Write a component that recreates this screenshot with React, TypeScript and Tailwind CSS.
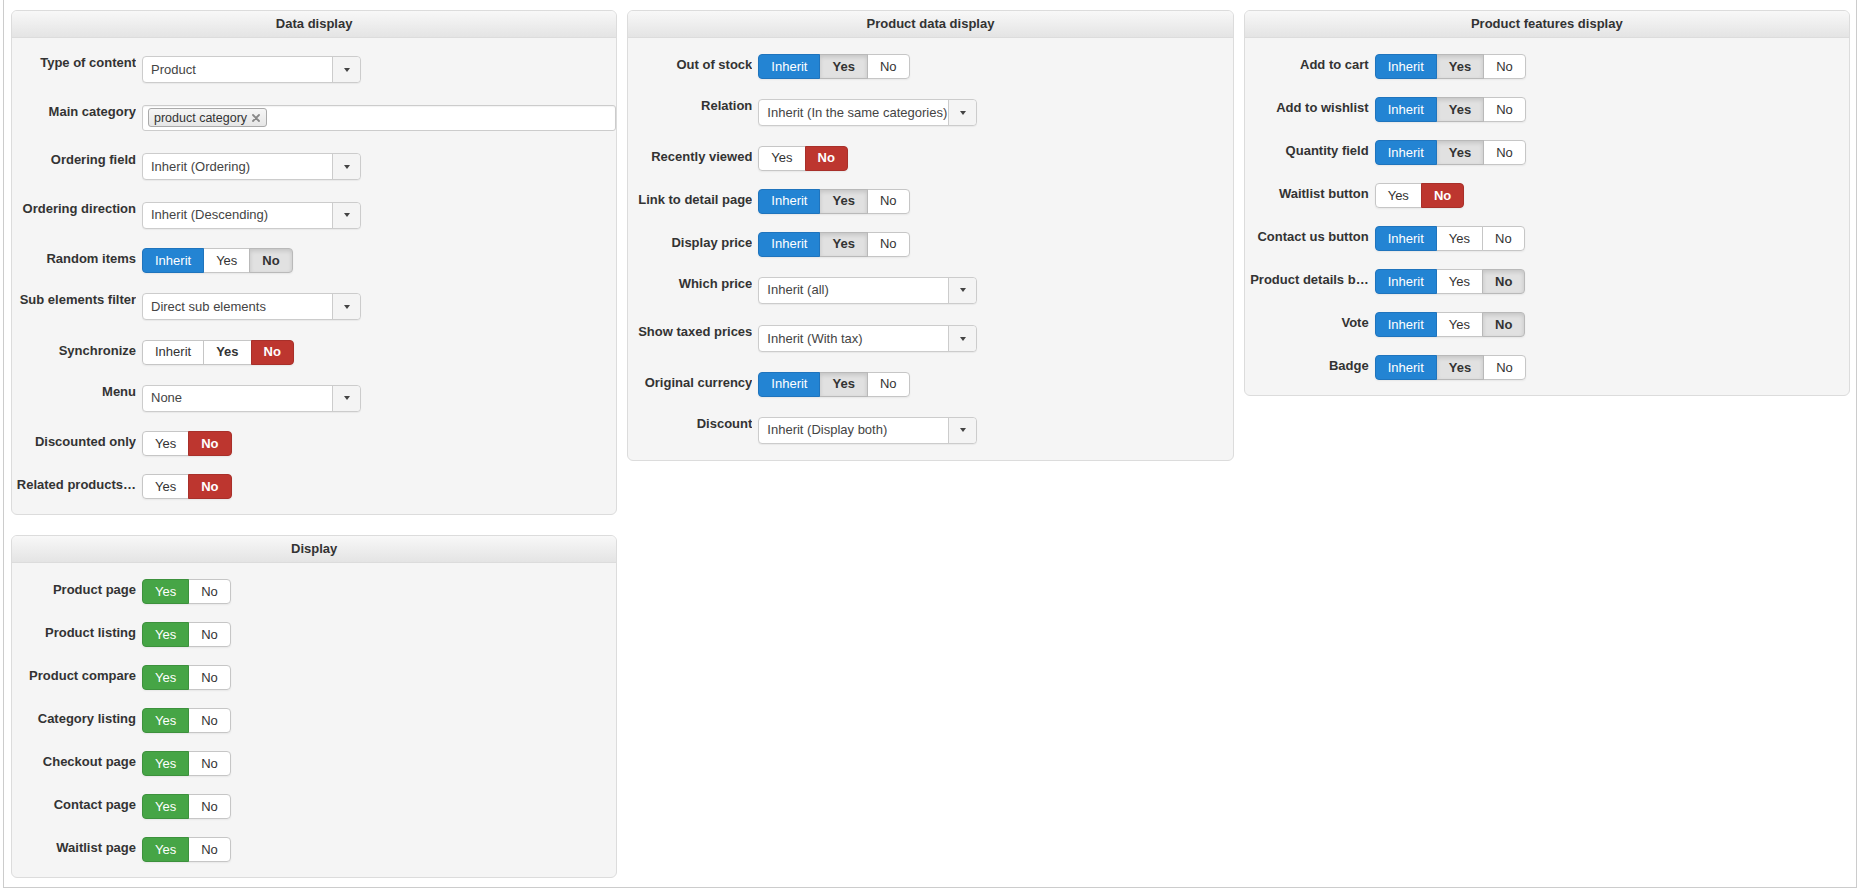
import React from 'react';

type Tone = 'blue' | 'red' | 'green' | 'gray' | 'white' | 'whiteBold';
type Seg = { t: string; s: Tone };

const toneCls: Record<Tone, string> = {
  blue: 'z-10 border-[#1f74bd] bg-[#2384d3] text-white',
  red: 'z-10 border-[#a8302a] bg-[#bd362f] text-white font-bold',
  green: 'z-10 border-[#3d913d] bg-[#46a546] text-white',
  gray: 'z-[5] border-[#b9b9b9] bg-[#e1e1e1] text-[#333333] font-bold shadow-[inset_0_2px_4px_rgba(0,0,0,0.13)]',
  white: 'border-[#c6c6c6] bg-white text-[#333333]',
  whiteBold: 'border-[#c6c6c6] bg-white text-[#333333] font-bold',
};

function Toggle({ segs }: { segs: Seg[] }) {
  return (
    <div className="flex h-[25px] shadow-[0_1px_2px_rgba(0,0,0,0.06)] rounded-[4px]">
      {segs.map((sg, i) => {
        const first = i === 0;
        const last = i === segs.length - 1;
        return (
          <div
            key={i}
            className={[
              'relative flex h-[25px] items-center border px-[12px] text-[13px] leading-[18px]',
              first ? 'rounded-l-[4px]' : '-ml-px',
              last ? 'rounded-r-[4px]' : '',
              toneCls[sg.s],
            ].join(' ')}
          >
            {sg.t}
          </div>
        );
      })}
    </div>
  );
}

function Select({ value }: { value: string }) {
  return (
    <div className="mt-[2px] flex h-[27px] w-[219px] items-stretch rounded-[4px] border border-[#cccccc] bg-white shadow-[0_1px_1px_rgba(0,0,0,0.05)]">
      <div className="flex flex-1 items-center overflow-hidden whitespace-nowrap pl-[8px] text-[13px] text-[#444444]">
        {value}
      </div>
      <div className="flex w-[28px] items-center justify-center rounded-r-[4px] border-l border-[#cccccc] bg-[#f4f4f4]">
        <div className="h-0 w-0 border-x-[3px] border-t-[4px] border-x-transparent border-t-[#444444]" />
      </div>
    </div>
  );
}

function TagInput() {
  return (
    <div className="mt-[2px] flex h-[26px] flex-1 items-center rounded-[3px] border border-[#cccccc] bg-white pl-[5px] shadow-[inset_0_1px_1px_rgba(0,0,0,0.05)]">
      <div className="flex h-[19px] items-center gap-[5px] rounded-[3px] border border-[#aaaaaa] bg-gradient-to-b from-[#f6f6f6] to-[#e6e6e6] pl-[5px] pr-[6px] text-[12.5px] leading-[16px] text-[#333333]">
        <span>product category</span>
        <svg width="8" height="8" viewBox="0 0 8 8">
          <path d="M1 1 L7 7 M7 1 L1 7" stroke="#888888" strokeWidth="1.8" strokeLinecap="round" />
        </svg>
      </div>
    </div>
  );
}

type Kind = 'select' | 'button';

function Row({ label, kind, children, last }: { label: string; kind: Kind; children: React.ReactNode; last?: boolean }) {
  return (
    <div className={['flex', kind === 'select' ? 'h-[30.5px]' : 'h-[25px]', last ? '' : 'mb-[18px]'].join(' ')}>
      <div
        className={[
          'w-[120px] shrink-0 overflow-hidden whitespace-nowrap text-right text-[13px] font-bold leading-[18px] text-[#333333]',
          kind === 'select' ? 'pt-0' : 'pt-[2px]',
        ].join(' ')}
      >
        {label}
      </div>
      <div className="ml-[6px] flex min-w-0 flex-1 items-start">{children}</div>
    </div>
  );
}

function Panel({ title, children }: { title: string; children: React.ReactNode }) {
  return (
    <div className="rounded-[6px] border border-[#dcdcdc] bg-[#f5f5f5]">
      <div className="flex h-[27px] items-center justify-center rounded-t-[5px] border-b border-[#dcdcdc] bg-gradient-to-b from-[#f8f8f8] to-[#e4e4e4] text-[13px] font-bold text-[#333333]">
        {title}
      </div>
      <div className="pb-[15px] pl-[4px] pt-[16px]">{children}</div>
    </div>
  );
}

const IYN = (y: Tone, n: Tone, i: Tone = 'blue'): Seg[] => [
  { t: 'Inherit', s: i },
  { t: 'Yes', s: y },
  { t: 'No', s: n },
];
const YN = (y: Tone, n: Tone): Seg[] => [
  { t: 'Yes', s: y },
  { t: 'No', s: n },
];

export default function App() {
  const displayRows = [
    'Product page',
    'Product listing',
    'Product compare',
    'Category listing',
    'Checkout page',
    'Contact page',
    'Waitlist page',
  ];
  return (
    <div className="min-h-[892px] w-full bg-white font-['Liberation_Sans',Arial,sans-serif]">
      <div className="ml-[3px] h-[888px] w-[1854px] border-x border-b border-[#cccccc] pl-[7px] pr-[6px] pt-[10px]">
        <div className="grid grid-cols-3 items-start gap-x-[10px]">
          <div className="flex flex-col gap-[20px]">
            <Panel title="Data display">
              <Row label="Type of content" kind="select">
                <Select value="Product" />
              </Row>
              <Row label="Main category" kind="select">
                <TagInput />
              </Row>
              <Row label="Ordering field" kind="select">
                <Select value="Inherit (Ordering)" />
              </Row>
              <Row label="Ordering direction" kind="select">
                <Select value="Inherit (Descending)" />
              </Row>
              <Row label="Random items" kind="button">
                <Toggle segs={IYN('white', 'gray')} />
              </Row>
              <Row label="Sub elements filter" kind="select">
                <Select value="Direct sub elements" />
              </Row>
              <Row label="Synchronize" kind="button">
                <Toggle segs={IYN('whiteBold', 'red', 'white')} />
              </Row>
              <Row label="Menu" kind="select">
                <Select value="None" />
              </Row>
              <Row label="Discounted only" kind="button">
                <Toggle segs={YN('white', 'red')} />
              </Row>
              <Row label="Related products…" kind="button" last>
                <Toggle segs={YN('white', 'red')} />
              </Row>
            </Panel>
            <Panel title="Display">
              {displayRows.map((l, i) => (
                <Row key={l} label={l} kind="button" last={i === displayRows.length - 1}>
                  <Toggle segs={YN('green', 'white')} />
                </Row>
              ))}
            </Panel>
          </div>

          <div className="flex flex-col">
            <Panel title="Product data display">
              <Row label="Out of stock" kind="button">
                <Toggle segs={IYN('gray', 'white')} />
              </Row>
              <Row label="Relation" kind="select">
                <Select value="Inherit (In the same categories)" />
              </Row>
              <Row label="Recently viewed" kind="button">
                <Toggle segs={YN('white', 'red')} />
              </Row>
              <Row label="Link to detail page" kind="button">
                <Toggle segs={IYN('gray', 'white')} />
              </Row>
              <Row label="Display price" kind="button">
                <Toggle segs={IYN('gray', 'white')} />
              </Row>
              <Row label="Which price" kind="select">
                <Select value="Inherit (all)" />
              </Row>
              <Row label="Show taxed prices" kind="select">
                <Select value="Inherit (With tax)" />
              </Row>
              <Row label="Original currency" kind="button">
                <Toggle segs={IYN('gray', 'white')} />
              </Row>
              <Row label="Discount" kind="select" last>
                <Select value="Inherit (Display both)" />
              </Row>
            </Panel>
          </div>

          <div className="flex flex-col">
            <Panel title="Product features display">
              <Row label="Add to cart" kind="button">
                <Toggle segs={IYN('gray', 'white')} />
              </Row>
              <Row label="Add to wishlist" kind="button">
                <Toggle segs={IYN('gray', 'white')} />
              </Row>
              <Row label="Quantity field" kind="button">
                <Toggle segs={IYN('gray', 'white')} />
              </Row>
              <Row label="Waitlist button" kind="button">
                <Toggle segs={YN('white', 'red')} />
              </Row>
              <Row label="Contact us button" kind="button">
                <Toggle segs={IYN('white', 'white')} />
              </Row>
              <Row label="Product details b…" kind="button">
                <Toggle segs={IYN('white', 'gray')} />
              </Row>
              <Row label="Vote" kind="button">
                <Toggle segs={IYN('white', 'gray')} />
              </Row>
              <Row label="Badge" kind="button" last>
                <Toggle segs={IYN('gray', 'white')} />
              </Row>
            </Panel>
          </div>
        </div>
      </div>
    </div>
  );
}
